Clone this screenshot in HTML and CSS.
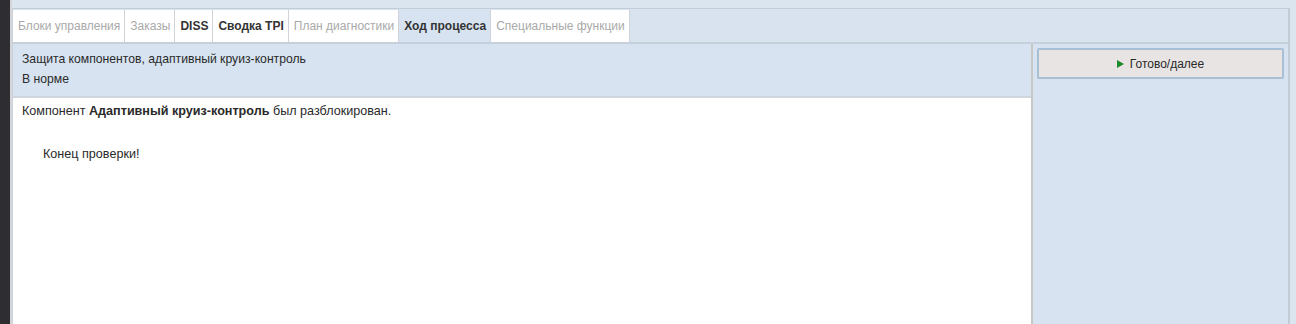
FILE: index.html
```html
<!DOCTYPE html>
<html lang="ru">
<head>
<meta charset="utf-8">
<link rel="stylesheet" href="styles.css">
</head>
<body>
<div class="side"></div>
<div class="app">
  <div class="frame">
    <div class="tabs">
      <div class="tab dis">Блоки управления</div>
      <div class="tab dis">Заказы</div>
      <div class="tab on">DISS</div>
      <div class="tab on">Сводка TPI</div>
      <div class="tab dis">План диагностики</div>
      <div class="tab on active">Ход процесса</div>
      <div class="tab dis">Специальные функции</div>
    </div>
    <div class="main">
      <div class="left">
        <div class="head">
          <div class="line">Защита компонентов, адаптивный круиз-контроль</div>
          <div class="line">В норме</div>
        </div>
        <div class="content">
          <p class="msg">Компонент <b>Адаптивный круиз-контроль</b> был разблокирован.</p>
          <p class="end">Конец проверки!</p>
        </div>
      </div>
      <div class="right">
        <button class="btn"><span class="tri"></span>Готово/далее</button>
      </div>
    </div>
  </div>
</div>
</body>
</html>
```

FILE: styles.css
```css
html, body {
  margin: 0;
  height: 100%;
}
body {
  display: flex;
  font-family: "Liberation Sans", Arial, sans-serif;
  font-size: 12px;
  color: #2a2a2a;
  background: #dbe5ef;
  overflow: hidden;
}
.side {
  width: 10px;
  background: #2e2e32;
  flex: none;
}
.app {
  flex: 1;
  display: flex;
  flex-direction: column;
  border-left: 2px solid #d6d6d8;
  padding-top: 8px;
  padding-right: 6px;
  background: #dbe5ef;
}
.frame {
  flex: 1;
  display: flex;
  flex-direction: column;
  border-top: 1px solid #c3cdd8;
  border-left: 1px solid #c9d2dc;
  border-right: 2px solid #c3ccd6;
  background: #d8e3ef;
}
.tabs {
  display: flex;
  height: 32px;
  padding-top: 1px;
  border-bottom: 2px solid #c6d0da;
  background: #d8e3ef;
}
.tab {
  background: #fff;
  border-right: 1px solid #d0d4d8;
  padding: 0 4px 0 5px;
  display: flex;
  align-items: center;
  font-size: 12px;
  color: #2a2a2a;
}
.tab.dis {
  color: #a9a9a9;
}
.tab.on {
  font-weight: bold;
  color: #333;
}
.tab.active {
  background: #d7e3f0;
}
.main {
  flex: 1;
  display: flex;
}
.left {
  width: 1018px;
  display: flex;
  flex-direction: column;
  background: #fff;
  border-right: 2px solid #c7c7c7;
}
.head {
  background: #d7e3f1;
  padding: 7px 9px 0;
  height: 45px;
  border-bottom: 2px solid #cfd6de;
  font-size: 12.2px;
}
.line {
  height: 20px;
  line-height: 16px;
}
.content {
  flex: 1;
  padding: 5px 9px;
  font-size: 12.6px;
}
.msg {
  margin: 0;
  line-height: 16px;
}
.end {
  margin: 27px 0 0 21px;
  line-height: 16px;
}
.right {
  flex: 1;
  background: #d7e3f1;
  padding: 4px 4px 0 4px;
}
.btn {
  width: 100%;
  height: 31px;
  background: #e8e4e4;
  border: 2px solid #a9bfd3;
  border-radius: 2px;
  font-family: "Liberation Sans", Arial, sans-serif;
  font-size: 12px;
  color: #2a2a2a;
  display: flex;
  align-items: center;
  justify-content: center;
  padding: 0;
}
.tri {
  width: 0;
  height: 0;
  border-top: 4px solid transparent;
  border-bottom: 4px solid transparent;
  border-left: 7px solid #1f8a2a;
  margin-right: 6px;
}
```
